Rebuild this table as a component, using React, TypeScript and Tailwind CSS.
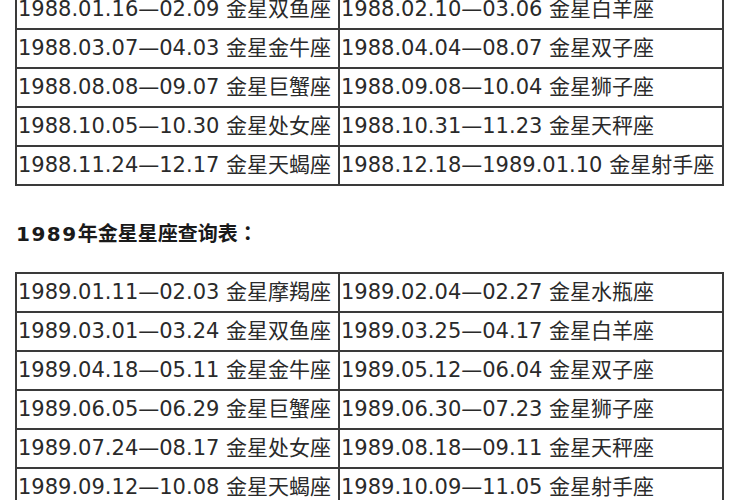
import React from 'react';

const table1988: [string, string][] = [
  ['1988.01.16—02.09 金星双鱼座', '1988.02.10—03.06 金星白羊座'],
  ['1988.03.07—04.03 金星金牛座', '1988.04.04—08.07 金星双子座'],
  ['1988.08.08—09.07 金星巨蟹座', '1988.09.08—10.04 金星狮子座'],
  ['1988.10.05—10.30 金星处女座', '1988.10.31—11.23 金星天秤座'],
  ['1988.11.24—12.17 金星天蝎座', '1988.12.18—1989.01.10 金星射手座'],
];

const table1989: [string, string][] = [
  ['1989.01.11—02.03 金星摩羯座', '1989.02.04—02.27 金星水瓶座'],
  ['1989.03.01—03.24 金星双鱼座', '1989.03.25—04.17 金星白羊座'],
  ['1989.04.18—05.11 金星金牛座', '1989.05.12—06.04 金星双子座'],
  ['1989.06.05—06.29 金星巨蟹座', '1989.06.30—07.23 金星狮子座'],
  ['1989.07.24—08.17 金星处女座', '1989.08.18—09.11 金星天秤座'],
  ['1989.09.12—10.08 金星天蝎座', '1989.10.09—11.05 金星射手座'],
];

function VenusTable({ rows, className }: { rows: [string, string][]; className?: string }) {
  return (
    <table className={`table-fixed w-[707px] border-collapse border-2 border-[#3a3a3a] ${className ?? ''}`}>
      <colgroup>
        <col className="w-[323px]" />
        <col className="w-[384px]" />
      </colgroup>
      <tbody>
        {rows.map(([a, b]) => (
          <tr key={a}>
            <td className="h-[39px] border-2 border-[#3a3a3a] px-[1px] py-0 whitespace-nowrap overflow-visible leading-none">{a}</td>
            <td className="h-[39px] border-2 border-[#3a3a3a] px-[1px] py-0 whitespace-nowrap overflow-visible leading-none">{b}</td>
          </tr>
        ))}
      </tbody>
    </table>
  );
}

export default function App() {
  return (
    <div className="w-[750px] h-[500px] overflow-hidden bg-white text-[#2a2a2a] text-[21px] font-['DejaVu_Sans','Noto_Sans_CJK_SC',sans-serif] pl-[15px]">
      <VenusTable rows={table1988} className="-mt-[11px]" />
      <h3 className="mt-[35px] mb-[26px] text-[20px] font-bold text-[#1a1a1a] leading-[24px] pl-[1px]">
        <span className="tracking-[1.5px]">1989</span>
        <span className="font-['Noto_Sans_CJK_SC',sans-serif]">年金星星座查询表</span>
        <span className="font-['Noto_Sans_CJK_TC',sans-serif]">：</span>
      </h3>
      <VenusTable rows={table1989} />
    </div>
  );
}
